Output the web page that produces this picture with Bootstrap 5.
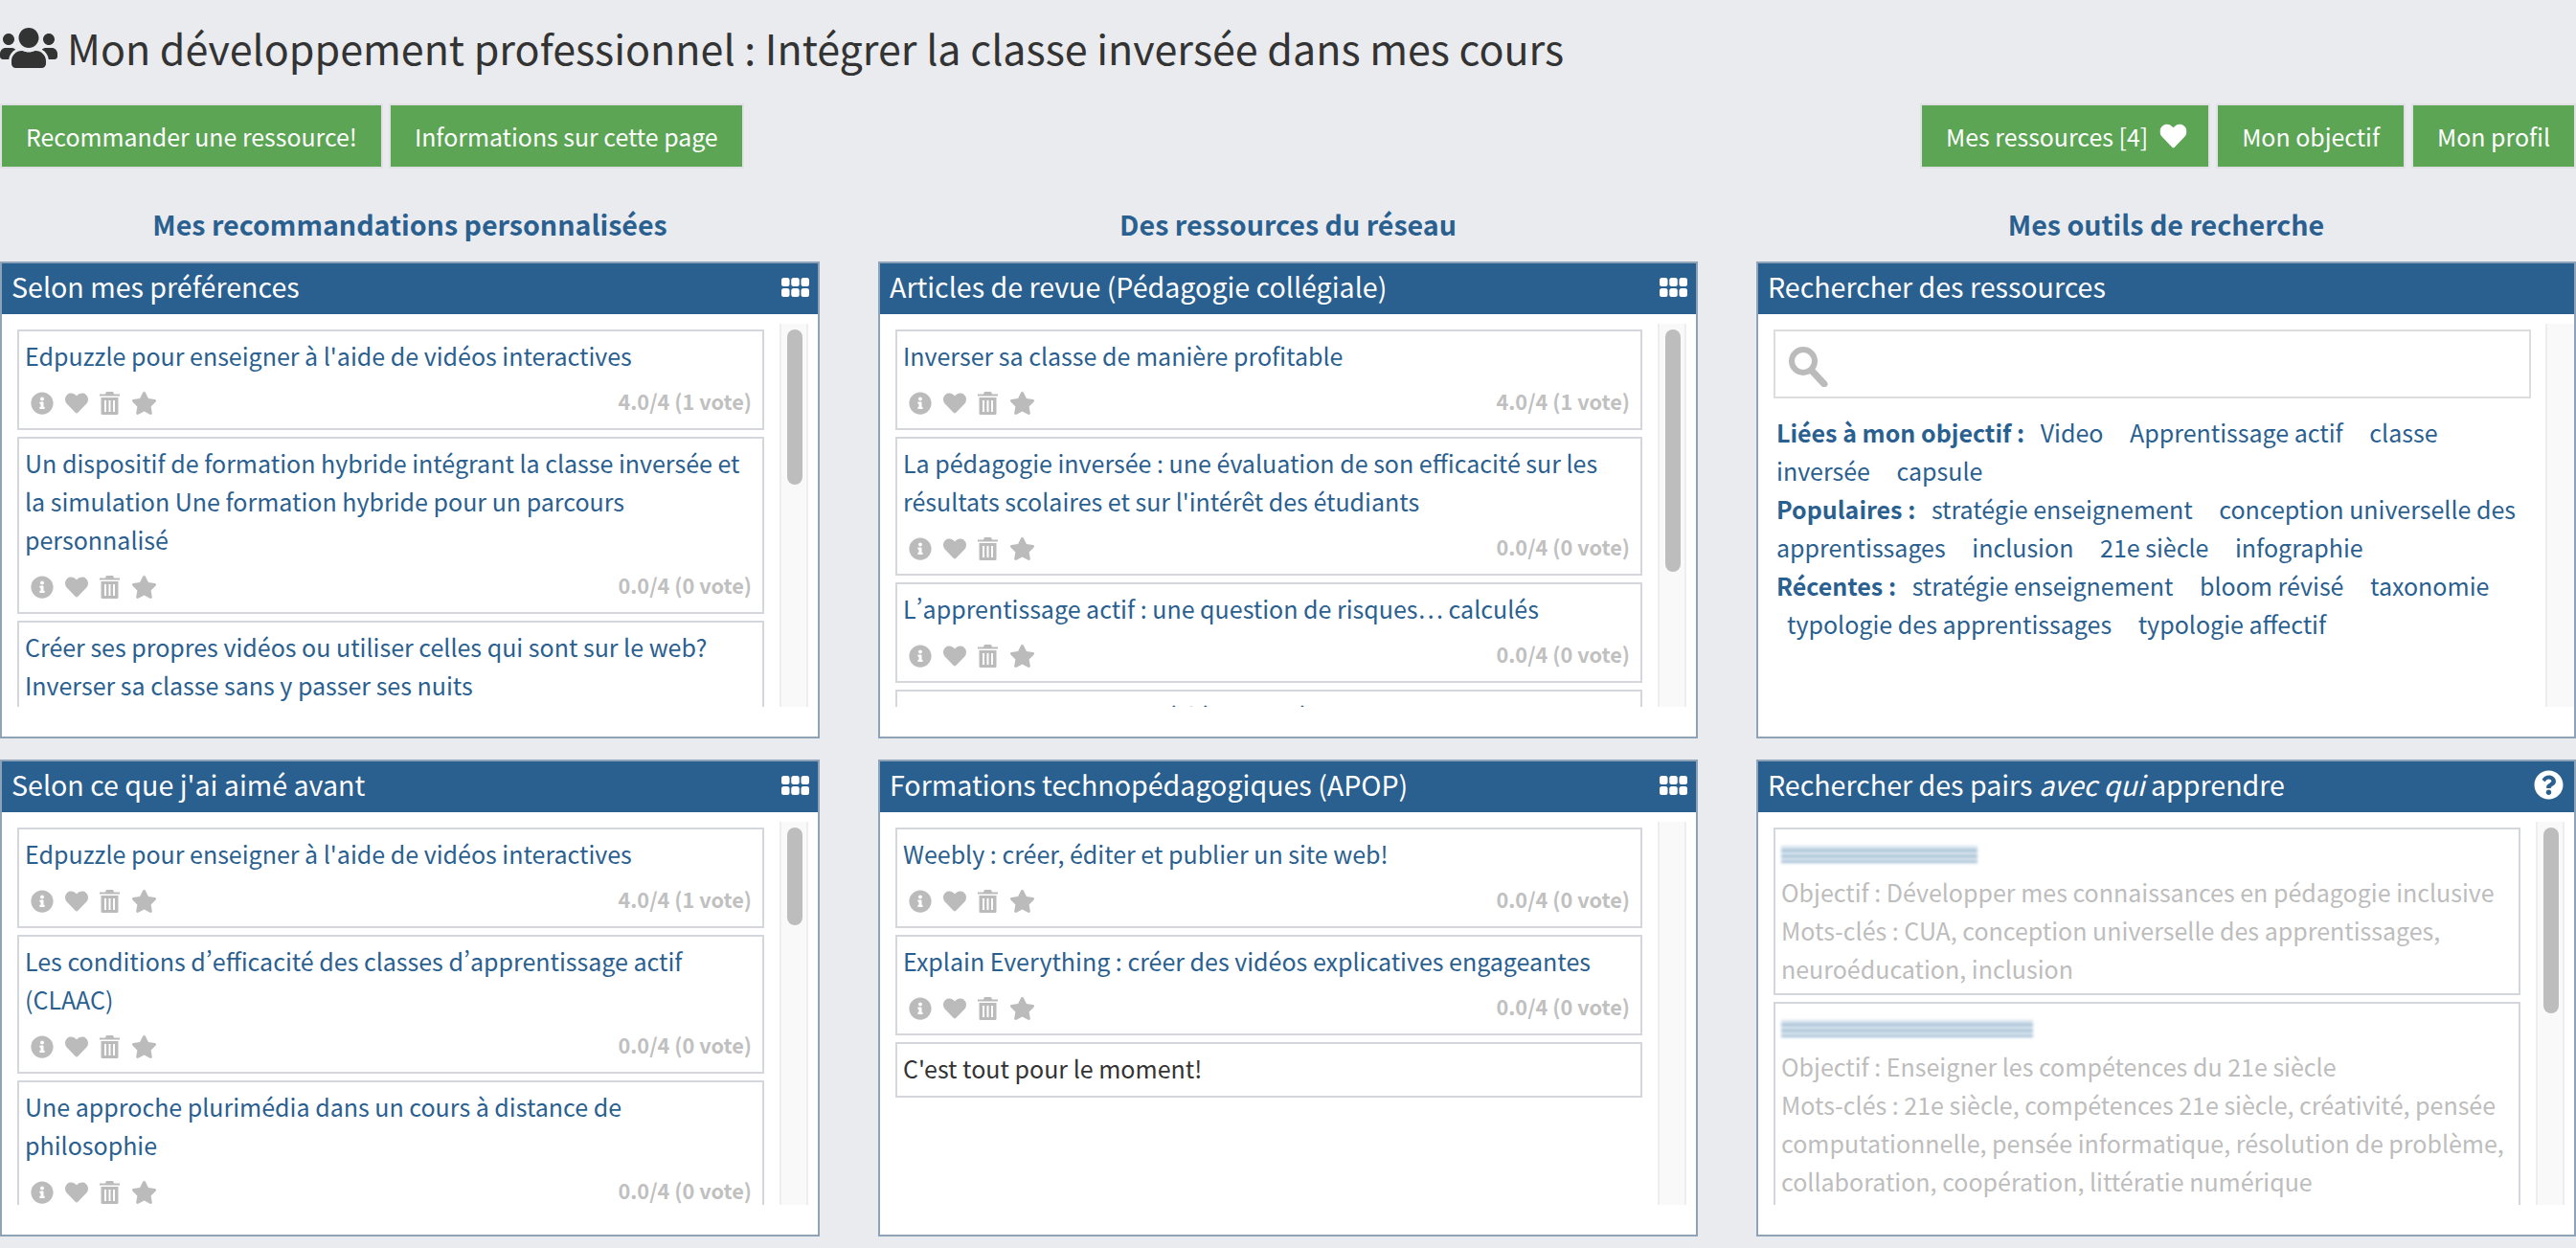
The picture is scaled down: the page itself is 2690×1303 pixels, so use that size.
<!DOCTYPE html>
<html lang="fr">
<head>
<meta charset="utf-8">
<title>Mon développement professionnel</title>
<link href="https://cdn.jsdelivr.net/npm/bootstrap@5.3.0/dist/css/bootstrap.min.css" rel="stylesheet">
<style>
html,body{height:100%;overflow:hidden}
body{background:#e9ebef;color:#333;font-family:"Noto Sans CJK SC","Noto Sans CJK JP",sans-serif;font-size:25px;line-height:40px;font-feature-settings:"pwid"}
.page-title{font-size:43px;line-height:60px;font-weight:400;margin:0;height:108px;padding-top:19px;color:#333;gap:10px}
.page-title svg{width:60px;height:48px;fill:#333;margin-top:7px;flex:none}
.act-btn{background:#5ba555;background-clip:padding-box;border:2px solid #dfe1e4;border-radius:0;color:#fff;font-size:24.9px;line-height:40px;height:68px;padding:12px 25px;white-space:nowrap}
.act-btn:hover{background:#5ba555;color:#fff;border-color:#dfe1e4}
.act-btn svg{width:29px;height:28px;fill:#fff;margin:0 -3px 0 12px;vertical-align:-3px}
.btn-bar{gap:6px}
.cols-wrap{overflow:hidden}
.cols-row{--bs-gutter-x:61px;--bs-gutter-y:0}
.col-head{font-size:28.6px;font-weight:700;color:#2a6090;text-align:center;line-height:40px;margin:38px 0 19px}
.panel-x{height:498px;background:#fff;border:2px solid #8ea3b7;margin-bottom:22px}
.panel-head{background:#2a6090;color:#fff;height:53px;font-size:28.6px;line-height:47px;padding:0 9px 6px 10px;flex:none}
.panel-head svg{fill:#fff;flex:none}
.ic-grid{width:29px;height:20px;margin-top:3px}
.ic-help{width:31px;height:31px;margin-top:2px;margin-right:2px}
.scroll-zone{margin:10px 10px 0 16px;height:400px;overflow:hidden;gap:16px}
.scroll-list{flex:1 1 0;min-width:0;padding-top:6px;height:400px;overflow:hidden}
.res-item{border:2px solid #d3d7dc;padding:5px 7px 9px 6px;margin-bottom:7px;background:#fff}
.res-item a{color:#2a6090;text-decoration:none;display:block}
.meta-row{height:47px;padding:8px 4px 0 6px;color:#bbb}
.meta-row svg{fill:#bbb;height:24px;flex:none}
.ics{gap:12px;padding-top:10px}
.rate{font-size:21.700px;font-weight:700;color:#c0c0c0;line-height:30px;padding-top:5px}
.track{flex:0 0 30px;width:30px;height:400px;background:#f9f9f9;border-left:2px solid #eee;border-right:2px solid #eee;padding:6px 6px 0}
.thumb-x{background:#bdbdbd;border-radius:8px;width:16px}
.tall-a{height:162px}.tall-b{height:253px}.tall-c{height:102px}.tall-d{height:194px}
.peer{color:#bdbdbd;padding:5px 6px 6px 6px}
.blur-name{height:18px;margin:12px 0 10px 0;background:repeating-linear-gradient(180deg,#c6d7e5 0,#c6d7e5 4px,#6f9abd 4px,#6f9abd 6px);filter:blur(1.500px);opacity:.7}
.search-zone{margin:10px 0 0 16px;height:400px;overflow:hidden;gap:15px}
.search-inner{flex:1 1 0;min-width:0;padding-top:6px}
.search-box{height:72px;border:2px solid #ddd;background:#fff;padding:14px 12px;margin-bottom:15px}
.search-box svg{width:44px;height:44px;fill:none;stroke:#bbb;display:block}
.tag-lines{padding-left:3px;color:#2a6090;padding-right:8px}
.tag-lines b{font-weight:700}
.tag-x{margin:0 11px;color:#2a6090}
.track.wide-t{border-right:0;height:400px}
.plain-note{color:#333}
</style>
</head>
<body>
<svg width="0" height="0" class="position-absolute">
<defs>
<symbol id="i-info" viewBox="0 0 512 512"><path d="M256 8C119.043 8 8 119.083 8 256c0 136.997 111.043 248 248 248s248-111.003 248-248C504 119.083 392.957 8 256 8zm0 110c23.196 0 42 18.804 42 42s-18.804 42-42 42-42-18.804-42-42 18.804-42 42-42zm56 254c0 6.627-5.373 12-12 12h-88c-6.627 0-12-5.373-12-12v-24c0-6.627 5.373-12 12-12h12v-64h-12c-6.627 0-12-5.373-12-12v-24c0-6.627 5.373-12 12-12h64c6.627 0 12 5.373 12 12v100h12c6.627 0 12 5.373 12 12v24z"/></symbol>
<symbol id="i-heart" viewBox="0 0 512 512"><path d="M462.3 62.6C407.5 15.9 326 24.3 275.7 76.2L256 96.5l-19.7-20.3C186.1 24.3 104.5 15.9 49.7 62.6c-62.8 53.6-66.1 149.8-9.9 207.9l193.5 199.8c12.5 12.9 32.8 12.9 45.3 0l193.5-199.8c56.3-58.1 53-154.3-9.8-207.9z"/></symbol>
<symbol id="i-trash" viewBox="0 0 21 24"><path fill-rule="evenodd" d="M7 0h7l1 2.500h6v2H0v-2h6zM1.500 6h18v16.500a1.500 1.500 0 0 1-1.500 1.500H3a1.500 1.500 0 0 1-1.500-1.500zM5 9v12h2V9zm4.500 0v12h2V9zM14 9v12h2V9z"/></symbol>
<symbol id="i-star" viewBox="0 0 576 512"><path d="M259.3 17.8L194 150.2 47.900 171.500c-26.200 3.800-36.700 36.100-17.700 54.600l105.700 103-25 145.500c-4.500 26.300 23.200 46 46.400 33.700L288 439.600l130.700 68.700c23.200 12.200 50.900-7.400 46.400-33.700l-25-145.500 105.700-103c19-18.500 8.500-50.800-17.700-54.600L382 150.200 316.700 17.800c-11.700-23.600-45.600-23.900-57.400 0z"/></symbol>
<symbol id="i-grid" viewBox="0 0 29 20"><rect x="0" y="0" width="8.500" height="9" rx="2.500"/><rect x="10.250" y="0" width="8.500" height="9" rx="2.500"/><rect x="20.500" y="0" width="8.500" height="9" rx="2.500"/><rect x="0" y="11" width="8.500" height="9" rx="2.500"/><rect x="10.250" y="11" width="8.500" height="9" rx="2.500"/><rect x="20.500" y="11" width="8.500" height="9" rx="2.500"/></symbol>
</defs>
</svg>

<h1 class="page-title d-flex align-items-start">
<svg viewBox="0 0 640 512"><path d="M96 224c35.300 0 64-28.700 64-64s-28.700-64-64-64-64 28.700-64 64 28.700 64 64 64zm448 0c35.300 0 64-28.700 64-64s-28.700-64-64-64-64 28.700-64 64 28.700 64 64 64zm32 32h-64c-17.600 0-33.500 7.100-45.100 18.600 40.300 22.100 68.900 62 75.100 109.400h66c17.700 0 32-14.300 32-32v-32c0-35.300-28.700-64-64-64zm-256 0c61.900 0 112-50.100 112-112S381.900 32 320 32 208 82.100 208 144s50.100 112 112 112zm76.800 32h-8.300c-20.800 10-43.900 16-68.500 16s-47.600-6-68.500-16h-8.300C179.600 288 128 339.600 128 403.200V432c0 26.500 21.500 48 48 48h288c26.500 0 48-21.500 48-48v-28.800c0-63.600-51.600-115.200-115.200-115.200zm-223.700-13.400C161.500 263.100 145.600 256 128 256H64c-35.300 0-64 28.700-64 64v32c0 17.700 14.300 32 32 32h65.900c6.300-47.400 34.900-87.300 75.200-109.400z"/></svg>
<span>Mon développement professionnel : Intégrer la classe inversée dans mes cours</span>
</h1>

<div class="d-flex justify-content-between">
  <div class="d-flex btn-bar">
    <button class="btn act-btn" type="button">Recommander une ressource!</button>
    <button class="btn act-btn" type="button">Informations sur cette page</button>
  </div>
  <div class="d-flex btn-bar">
    <button class="btn act-btn" type="button">Mes ressources [4]<svg viewBox="0 0 512 512"><use href="#i-heart"/></svg></button>
    <button class="btn act-btn" type="button">Mon objectif</button>
    <button class="btn act-btn" type="button">Mon profil</button>
  </div>
</div>

<div class="cols-wrap">
<div class="row cols-row">

<div class="col-4">
  <div class="col-head">Mes recommandations personnalisées</div>

  <section class="panel-x d-flex flex-column">
    <div class="panel-head d-flex justify-content-between align-items-center"><span>Selon mes préférences</span><svg class="ic-grid"><use href="#i-grid"/></svg></div>
    <div class="scroll-zone d-flex">
      <div class="scroll-list">
        <div class="res-item"><a href="#">Edpuzzle pour enseigner à l'aide de vidéos interactives</a>
          <div class="meta-row d-flex justify-content-between"><span class="ics d-flex"><svg width="24"><use href="#i-info"/></svg><svg width="24"><use href="#i-heart"/></svg><svg width="21"><use href="#i-trash"/></svg><svg width="27"><use href="#i-star"/></svg></span><span class="rate">4.0/4 (1 vote)</span></div></div>
        <div class="res-item"><a href="#">Un dispositif de formation hybride intégrant la classe inversée et la simulation Une formation hybride pour un parcours personnalisé</a>
          <div class="meta-row d-flex justify-content-between"><span class="ics d-flex"><svg width="24"><use href="#i-info"/></svg><svg width="24"><use href="#i-heart"/></svg><svg width="21"><use href="#i-trash"/></svg><svg width="27"><use href="#i-star"/></svg></span><span class="rate">0.0/4 (0 vote)</span></div></div>
        <div class="res-item"><a href="#">Créer ses propres vidéos ou utiliser celles qui sont sur le web? Inverser sa classe sans y passer ses nuits</a>
          <div class="meta-row d-flex justify-content-between"><span class="ics d-flex"><svg width="24"><use href="#i-info"/></svg><svg width="24"><use href="#i-heart"/></svg><svg width="21"><use href="#i-trash"/></svg><svg width="27"><use href="#i-star"/></svg></span><span class="rate">0.0/4 (0 vote)</span></div></div>
      </div>
      <div class="track"><div class="thumb-x tall-a"></div></div>
    </div>
  </section>

  <section class="panel-x d-flex flex-column">
    <div class="panel-head d-flex justify-content-between align-items-center"><span>Selon ce que j'ai aimé avant</span><svg class="ic-grid"><use href="#i-grid"/></svg></div>
    <div class="scroll-zone d-flex">
      <div class="scroll-list">
        <div class="res-item"><a href="#">Edpuzzle pour enseigner à l'aide de vidéos interactives</a>
          <div class="meta-row d-flex justify-content-between"><span class="ics d-flex"><svg width="24"><use href="#i-info"/></svg><svg width="24"><use href="#i-heart"/></svg><svg width="21"><use href="#i-trash"/></svg><svg width="27"><use href="#i-star"/></svg></span><span class="rate">4.0/4 (1 vote)</span></div></div>
        <div class="res-item"><a href="#">Les conditions d’efficacité des classes d’apprentissage actif (CLAAC)</a>
          <div class="meta-row d-flex justify-content-between"><span class="ics d-flex"><svg width="24"><use href="#i-info"/></svg><svg width="24"><use href="#i-heart"/></svg><svg width="21"><use href="#i-trash"/></svg><svg width="27"><use href="#i-star"/></svg></span><span class="rate">0.0/4 (0 vote)</span></div></div>
        <div class="res-item"><a href="#">Une approche plurimédia dans un cours à distance de philosophie</a>
          <div class="meta-row d-flex justify-content-between"><span class="ics d-flex"><svg width="24"><use href="#i-info"/></svg><svg width="24"><use href="#i-heart"/></svg><svg width="21"><use href="#i-trash"/></svg><svg width="27"><use href="#i-star"/></svg></span><span class="rate">0.0/4 (0 vote)</span></div></div>
      </div>
      <div class="track"><div class="thumb-x tall-c"></div></div>
    </div>
  </section>
</div>

<div class="col-4">
  <div class="col-head">Des ressources du réseau</div>

  <section class="panel-x d-flex flex-column">
    <div class="panel-head d-flex justify-content-between align-items-center"><span>Articles de revue (Pédagogie collégiale)</span><svg class="ic-grid"><use href="#i-grid"/></svg></div>
    <div class="scroll-zone d-flex">
      <div class="scroll-list">
        <div class="res-item"><a href="#">Inverser sa classe de manière profitable</a>
          <div class="meta-row d-flex justify-content-between"><span class="ics d-flex"><svg width="24"><use href="#i-info"/></svg><svg width="24"><use href="#i-heart"/></svg><svg width="21"><use href="#i-trash"/></svg><svg width="27"><use href="#i-star"/></svg></span><span class="rate">4.0/4 (1 vote)</span></div></div>
        <div class="res-item"><a href="#">La pédagogie inversée : une évaluation de son efficacité sur les résultats scolaires et sur l'intérêt des étudiants</a>
          <div class="meta-row d-flex justify-content-between"><span class="ics d-flex"><svg width="24"><use href="#i-info"/></svg><svg width="24"><use href="#i-heart"/></svg><svg width="21"><use href="#i-trash"/></svg><svg width="27"><use href="#i-star"/></svg></span><span class="rate">0.0/4 (0 vote)</span></div></div>
        <div class="res-item"><a href="#">L’apprentissage actif : une question de risques… calculés</a>
          <div class="meta-row d-flex justify-content-between"><span class="ics d-flex"><svg width="24"><use href="#i-info"/></svg><svg width="24"><use href="#i-heart"/></svg><svg width="21"><use href="#i-trash"/></svg><svg width="27"><use href="#i-star"/></svg></span><span class="rate">0.0/4 (0 vote)</span></div></div>
        <div class="res-item"><a href="#">Apprendre et enseigner à l'ère numérique</a></div>
      </div>
      <div class="track"><div class="thumb-x tall-b"></div></div>
    </div>
  </section>

  <section class="panel-x d-flex flex-column">
    <div class="panel-head d-flex justify-content-between align-items-center"><span>Formations technopédagogiques (APOP)</span><svg class="ic-grid"><use href="#i-grid"/></svg></div>
    <div class="scroll-zone d-flex">
      <div class="scroll-list">
        <div class="res-item"><a href="#">Weebly : créer, éditer et publier un site web!</a>
          <div class="meta-row d-flex justify-content-between"><span class="ics d-flex"><svg width="24"><use href="#i-info"/></svg><svg width="24"><use href="#i-heart"/></svg><svg width="21"><use href="#i-trash"/></svg><svg width="27"><use href="#i-star"/></svg></span><span class="rate">0.0/4 (0 vote)</span></div></div>
        <div class="res-item"><a href="#">Explain Everything : créer des vidéos explicatives engageantes</a>
          <div class="meta-row d-flex justify-content-between"><span class="ics d-flex"><svg width="24"><use href="#i-info"/></svg><svg width="24"><use href="#i-heart"/></svg><svg width="21"><use href="#i-trash"/></svg><svg width="27"><use href="#i-star"/></svg></span><span class="rate">0.0/4 (0 vote)</span></div></div>
        <div class="res-item plain-note">C'est tout pour le moment!</div>
      </div>
      <div class="track"></div>
    </div>
  </section>
</div>

<div class="col-4">
  <div class="col-head">Mes outils de recherche</div>

  <section class="panel-x d-flex flex-column">
    <div class="panel-head d-flex justify-content-between align-items-center"><span>Rechercher des ressources</span></div>
    <div class="search-zone d-flex">
      <div class="search-inner">
        <div class="search-box"><svg viewBox="0 0 44 44"><circle cx="17" cy="17" r="12" stroke-width="6"/><path d="M26 27l13 14" stroke-width="7" stroke-linecap="round"/></svg></div>
        <div class="tag-lines">
          <div><b>Liées à mon objectif :</b> <span class="tag-x">Video</span> <span class="tag-x">Apprentissage actif</span> <span class="tag-x">classe inversée</span> <span class="tag-x">capsule</span></div>
          <div><b>Populaires :</b> <span class="tag-x">stratégie enseignement</span> <span class="tag-x">conception universelle des apprentissages</span> <span class="tag-x">inclusion</span> <span class="tag-x">21e siècle</span> <span class="tag-x">infographie</span></div>
          <div><b>Récentes :</b> <span class="tag-x">stratégie enseignement</span> <span class="tag-x">bloom révisé</span> <span class="tag-x">taxonomie</span> <span class="tag-x">typologie des apprentissages</span> <span class="tag-x">typologie affectif</span></div>
        </div>
      </div>
      <div class="track wide-t"></div>
    </div>
  </section>

  <section class="panel-x d-flex flex-column">
    <div class="panel-head d-flex justify-content-between align-items-center"><span>Rechercher des pairs <em>avec qui</em> apprendre</span><svg class="ic-help" viewBox="0 0 512 512"><path d="M504 256c0 136.997-111.043 248-248 248S8 392.997 8 256C8 119.083 119.043 8 256 8s248 111.083 248 248zM262.655 90c-54.497 0-89.255 22.957-116.549 63.758-3.536 5.286-2.353 12.415 2.715 16.258l34.699 26.31c5.205 3.947 12.621 3.008 16.665-2.122 17.864-22.658 30.113-35.797 57.303-35.797 20.429 0 45.698 13.148 45.698 32.958 0 14.976-12.363 22.667-32.534 33.976C247.128 238.528 216 254.941 216 296v4c0 6.627 5.373 12 12 12h56c6.627 0 12-5.373 12-12v-1.333c0-28.462 83.186-29.647 83.186-106.667 0-58.002-60.165-102-116.531-102zM256 338c-25.365 0-46 20.635-46 46 0 25.364 20.635 46 46 46s46-20.636 46-46c0-25.365-20.635-46-46-46z"/></svg></div>
    <div class="scroll-zone d-flex">
      <div class="scroll-list">
        <div class="res-item peer"><div class="blur-name" style="width:205px"></div>Objectif : Développer mes connaissances en pédagogie inclusive<br>Mots-clés : CUA, conception universelle des apprentissages, neuroéducation, inclusion</div>
        <div class="res-item peer"><div class="blur-name" style="width:263px"></div>Objectif : Enseigner les compétences du 21e siècle<br>Mots-clés : 21e siècle, compétences 21e siècle, créativité, pensée computationnelle, pensée informatique, résolution de problème, collaboration, coopération, littératie numérique</div>
      </div>
      <div class="track"><div class="thumb-x tall-d"></div></div>
    </div>
  </section>
</div>

</div>
</div>
</body>
</html>
